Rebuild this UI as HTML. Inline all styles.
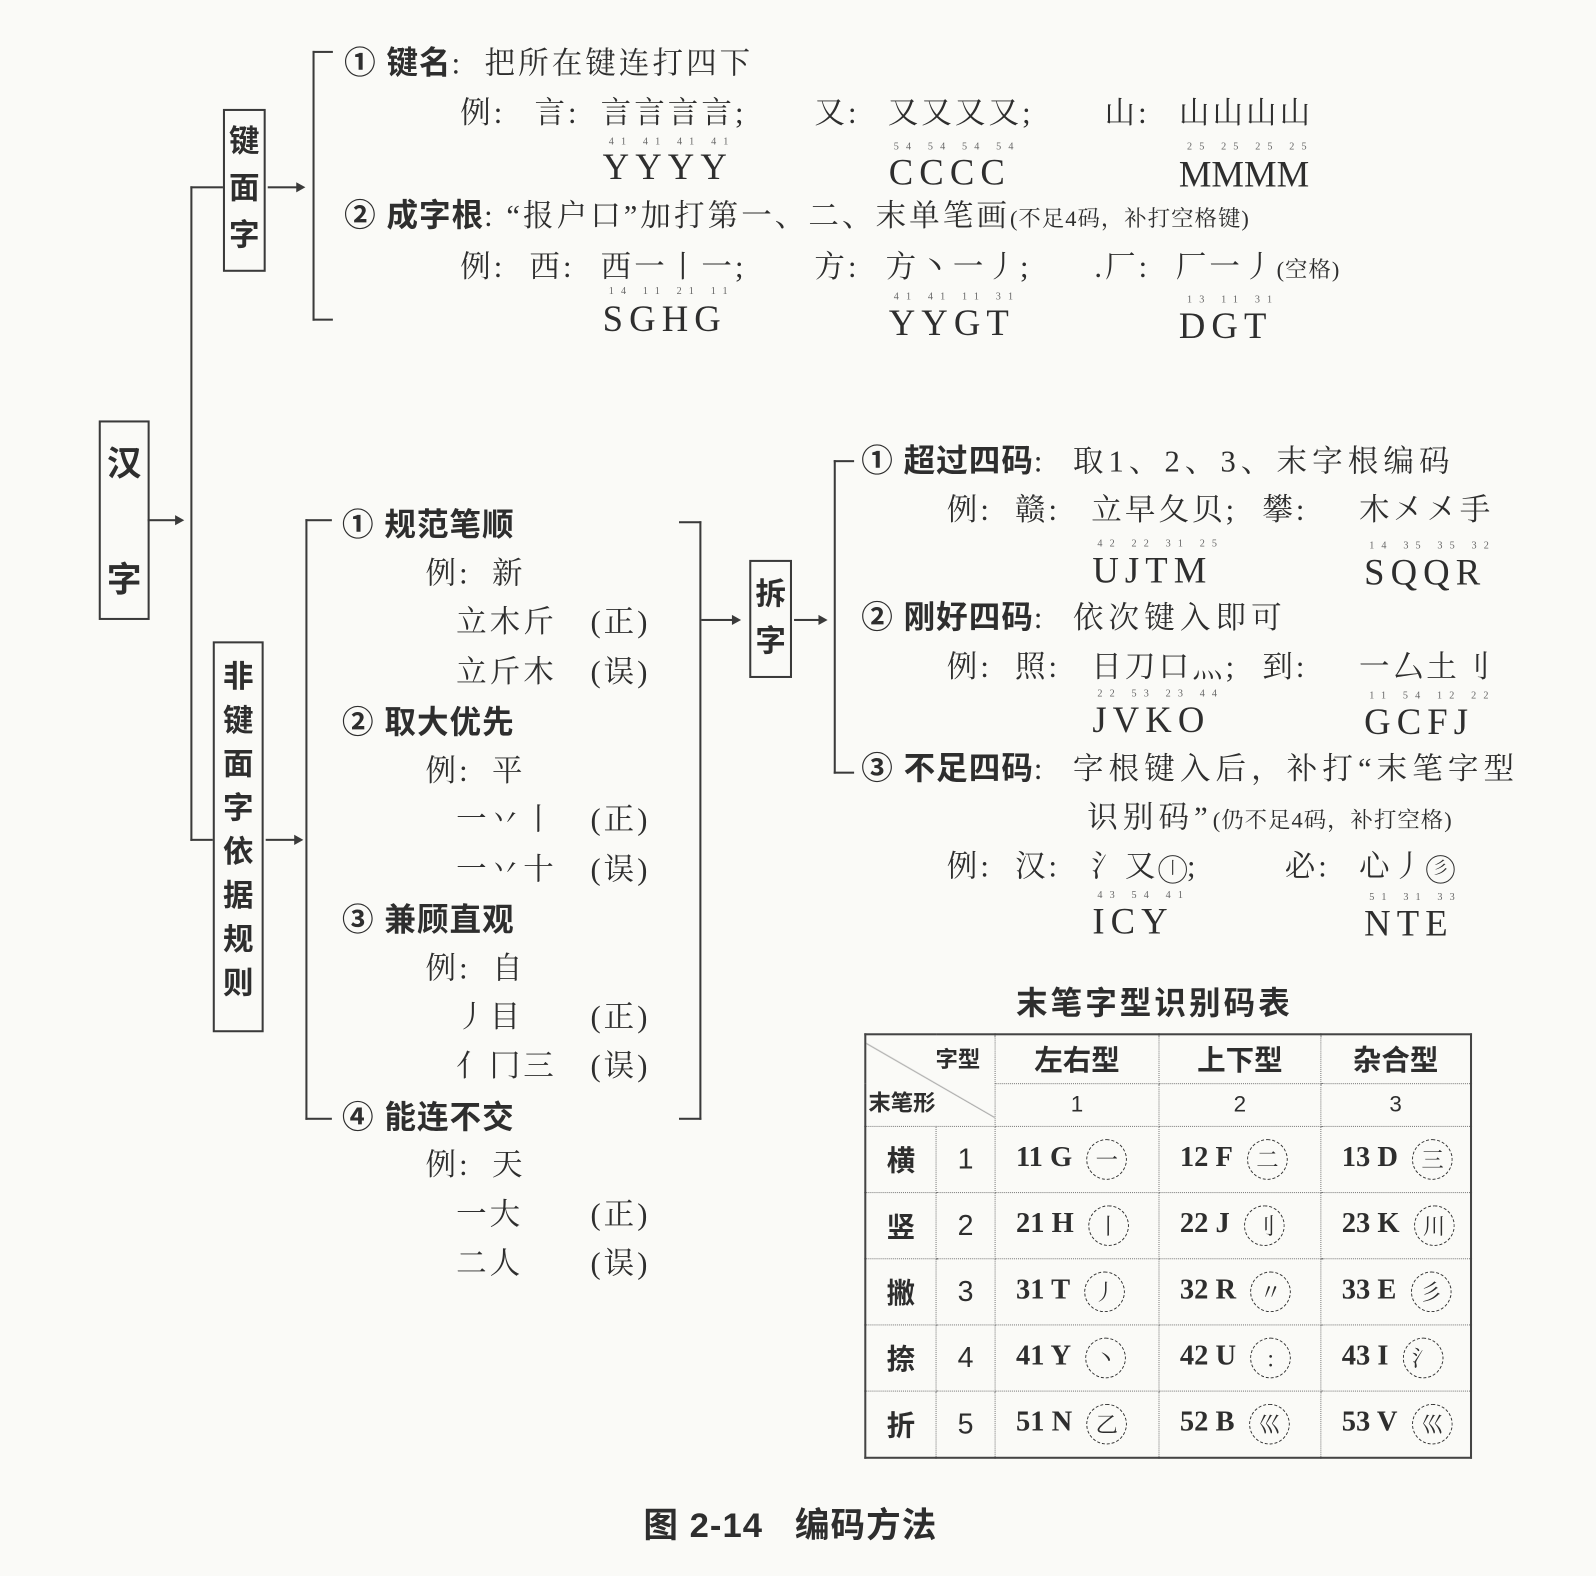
<!DOCTYPE html>
<html><head><meta charset="utf-8">
<style>
body{margin:0;background:#fafaf7;}
#w{width:1596px;height:1576px;overflow:hidden;background:#fafaf7;}
#c{position:relative;width:1568px;height:1548px;transform:scale(1.018);transform-origin:0 0;color:#2e2e2e;font-family:"Liberation Serif","Noto Serif CJK SC",serif;}
.t{position:absolute;white-space:nowrap;line-height:1;font-size:30px;letter-spacing:3px;}
.r{letter-spacing:5px;}
.b{font-family:"Liberation Sans","Noto Sans CJK SC",sans-serif;font-weight:bold;font-size:31px;letter-spacing:1px;}
.s{font-size:22px;letter-spacing:1px;}
.n{font-size:10px;color:#666;letter-spacing:7px;}
.L{font-size:36px;letter-spacing:6px;}
.h{position:absolute;background:#3a3a3a;height:2px;}
.v{position:absolute;background:#3a3a3a;width:2px;}
.box{position:absolute;border:2px solid #3a3a3a;font-family:"Liberation Sans","Noto Sans CJK SC",sans-serif;font-weight:bold;font-size:30px;text-align:center;line-height:44px;}
.ar{position:absolute;width:0;height:0;border-top:5px solid transparent;border-bottom:5px solid transparent;border-left:9px solid #3a3a3a;}
table{position:absolute;left:849px;top:1015px;width:597px;height:418px;border-collapse:collapse;border:2px solid #444;}
td{border:1px dotted #777;text-align:center;padding:0;font-size:28px;font-family:"Liberation Sans",sans-serif;}
td.k{font-family:"Liberation Sans","Noto Sans CJK SC",sans-serif;font-weight:bold;font-size:28px;}
td.c{font-family:"Liberation Serif",serif;font-weight:bold;font-size:28px;text-align:left;padding-left:20px;}
.ci{display:inline-block;width:38px;height:38px;border:1.5px dashed #333;border-radius:50%;font-size:22px;line-height:38px;text-align:center;margin-left:14px;vertical-align:middle;font-weight:normal;font-family:"Noto Serif CJK SC",serif;}
.cc{display:inline-block;width:26px;height:26px;border:1.5px solid #333;border-radius:50%;font-size:16px;line-height:26px;text-align:center;letter-spacing:0;vertical-align:middle;}
</style></head><body><div id="w"><div id="c">

<div class="box" style="left:97px;top:413px;width:46px;height:192px;font-size:34px;line-height:1;"><div style="margin-top:24px">汉</div><div style="margin-top:80px">字</div></div>
<div class="h" style="left:145px;top:510px;width:30px"></div><div class="ar" style="left:172px;top:506px"></div>
<div class="v" style="left:187px;top:183px;height:643px"></div>
<div class="h" style="left:187px;top:183px;width:32px"></div>
<div class="h" style="left:187px;top:824px;width:22px"></div>

<div class="box" style="left:219px;top:107px;width:42px;height:160px;line-height:46px;padding-top:8px;box-sizing:border-box">键<br>面<br>字</div>
<div class="h" style="left:263px;top:183px;width:30px"></div><div class="ar" style="left:291px;top:179px"></div>

<div class="v" style="left:307px;top:50px;height:265px"></div>
<div class="h" style="left:307px;top:50px;width:20px"></div>
<div class="h" style="left:307px;top:313px;width:20px"></div>

<div class="t" style="left:338px;top:46px"><span class="b">①&nbsp;键名</span>:&nbsp; 把所在键连打四下</div>
<div class="t" style="left:452px;top:97px">例:</div>
<div class="t" style="left:525px;top:97px">言:</div>
<div class="t" style="left:590px;top:97px">言言言言;</div>
<div class="t" style="left:800px;top:97px">又:</div>
<div class="t" style="left:872px;top:97px">又又又又;</div>
<div class="t" style="left:1085px;top:97px">山:</div>
<div class="t" style="left:1158px;top:97px">山山山山</div>
<div class="t n" style="left:598px;top:135px">41 41 41 41</div>
<div class="t n" style="left:878px;top:140px">54 54 54 54</div>
<div class="t n" style="left:1166px;top:140px">25 25 25 25</div>
<div class="t L" style="left:592px;top:146px">YYYY</div>
<div class="t L" style="left:873px;top:151px">CCCC</div>
<div class="t L" style="left:1158px;top:153px;letter-spacing:0">MMMM</div>

<div class="t" style="left:338px;top:196px"><span class="b">②&nbsp;成字根</span>: “报户口”加打第一、二、末单笔画<span class="s">(不足4码，补打空格键)</span></div>
<div class="t" style="left:452px;top:248px">例:</div>
<div class="t" style="left:520px;top:248px">西:</div>
<div class="t" style="left:590px;top:248px">西一丨一;</div>
<div class="t" style="left:800px;top:248px">方:</div>
<div class="t" style="left:870px;top:248px">方丶一丿;</div>
<div class="t" style="left:1075px;top:248px">.厂:</div>
<div class="t" style="left:1155px;top:248px">厂一丿<span class="s">(空格)</span></div>
<div class="t n" style="left:598px;top:282px">14 11 21 11</div>
<div class="t n" style="left:878px;top:287px">41 41 11 31</div>
<div class="t n" style="left:1166px;top:290px">13 11 31</div>
<div class="t L" style="left:592px;top:295px">SGHG</div>
<div class="t L" style="left:873px;top:299px">YYGT</div>
<div class="t L" style="left:1158px;top:302px">DGT</div>

<div class="box" style="left:209px;top:630px;width:50px;height:384px;line-height:43px;padding-top:12px;box-sizing:border-box">非<br>键<br>面<br>字<br>依<br>据<br>规<br>则</div>
<div class="h" style="left:261px;top:824px;width:30px"></div><div class="ar" style="left:289px;top:820px"></div>

<div class="v" style="left:300px;top:510px;height:590px"></div>
<div class="h" style="left:300px;top:510px;width:26px"></div>
<div class="h" style="left:300px;top:1098px;width:26px"></div>
<div class="v" style="left:687px;top:512px;height:588px"></div>
<div class="h" style="left:667px;top:512px;width:22px"></div>
<div class="h" style="left:667px;top:1098px;width:22px"></div>
<div class="h" style="left:689px;top:608px;width:32px"></div><div class="ar" style="left:719px;top:604px"></div>

<div class="t" style="left:336px;top:500px"><span class="b">①&nbsp;规范笔顺</span></div>
<div class="t" style="left:418px;top:549px">例:&nbsp; 新</div>
<div class="t" style="left:448px;top:597px">立木斤</div><div class="t" style="left:580px;top:597px">(正)</div>
<div class="t" style="left:448px;top:646px">立斤木</div><div class="t" style="left:580px;top:646px">(误)</div>
<div class="t" style="left:336px;top:694px"><span class="b">②&nbsp;取大优先</span></div>
<div class="t" style="left:418px;top:743px">例:&nbsp; 平</div>
<div class="t" style="left:448px;top:791px">一丷丨</div><div class="t" style="left:580px;top:791px">(正)</div>
<div class="t" style="left:448px;top:840px">一丷十</div><div class="t" style="left:580px;top:840px">(误)</div>
<div class="t" style="left:336px;top:888px"><span class="b">③&nbsp;兼顾直观</span></div>
<div class="t" style="left:418px;top:937px">例:&nbsp; 自</div>
<div class="t" style="left:448px;top:985px">丿目</div><div class="t" style="left:580px;top:985px">(正)</div>
<div class="t" style="left:448px;top:1033px">亻冂三</div><div class="t" style="left:580px;top:1033px">(误)</div>
<div class="t" style="left:336px;top:1082px"><span class="b">④&nbsp;能连不交</span></div>
<div class="t" style="left:418px;top:1130px">例:&nbsp; 天</div>
<div class="t" style="left:448px;top:1179px">一大</div><div class="t" style="left:580px;top:1179px">(正)</div>
<div class="t" style="left:448px;top:1227px">二人</div><div class="t" style="left:580px;top:1227px">(误)</div>

<div class="box" style="left:736px;top:550px;width:42px;height:116px;line-height:46px;padding-top:10px;box-sizing:border-box">拆<br>字</div>
<div class="h" style="left:780px;top:608px;width:26px"></div><div class="ar" style="left:804px;top:604px"></div>
<div class="v" style="left:819px;top:452px;height:308px"></div>
<div class="h" style="left:819px;top:452px;width:20px"></div>
<div class="h" style="left:819px;top:758px;width:20px"></div>

<div class="t r" style="left:846px;top:437px"><span class="b">①&nbsp;超过四码</span>:&nbsp; 取1、2、3、末字根编码</div>
<div class="t" style="left:930px;top:487px">例:</div>
<div class="t" style="left:997px;top:487px">赣:</div>
<div class="t" style="left:1072px;top:487px">立早夂贝;</div>
<div class="t" style="left:1240px;top:487px">攀:</div>
<div class="t" style="left:1335px;top:487px">木㐅㐅手</div>
<div class="t n" style="left:1078px;top:530px">42 22 31 25</div>
<div class="t n" style="left:1345px;top:532px">14 35 35 32</div>
<div class="t L" style="left:1073px;top:542px">UJTM</div>
<div class="t L" style="left:1340px;top:544px">SQQR</div>
<div class="t r" style="left:846px;top:591px"><span class="b">②&nbsp;刚好四码</span>:&nbsp; 依次键入即可</div>
<div class="t" style="left:930px;top:641px">例:</div>
<div class="t" style="left:997px;top:641px">照:</div>
<div class="t" style="left:1072px;top:641px">日刀口灬;</div>
<div class="t" style="left:1240px;top:641px">到:</div>
<div class="t" style="left:1335px;top:641px">一厶土刂</div>
<div class="t n" style="left:1078px;top:677px">22 53 23 44</div>
<div class="t n" style="left:1345px;top:679px">11 54 12 22</div>
<div class="t L" style="left:1073px;top:689px">JVKO</div>
<div class="t L" style="left:1340px;top:691px">GCFJ</div>
<div class="t r" style="left:846px;top:739px"><span class="b">③&nbsp;不足四码</span>:&nbsp; 字根键入后，补打“末笔字型</div>
<div class="t r" style="left:1068px;top:789px">识别码”<span class="s">(仍不足4码，补打空格)</span></div>
<div class="t" style="left:930px;top:837px">例:</div>
<div class="t" style="left:997px;top:837px">汉:</div>
<div class="t" style="left:1072px;top:837px">氵又<span class="cc">丨</span>;</div>
<div class="t" style="left:1262px;top:837px">必:</div>
<div class="t" style="left:1335px;top:837px">心丿<span class="cc">彡</span></div>
<div class="t n" style="left:1078px;top:875px">43 54 41</div>
<div class="t n" style="left:1345px;top:877px">51 31 33</div>
<div class="t L" style="left:1073px;top:887px">ICY</div>
<div class="t L" style="left:1340px;top:889px">NTE</div>

<div class="t b" style="left:998px;top:970px;letter-spacing:3px">末笔字型识别码表</div>
<table>
<tr style="height:48px"><td colspan="2" rowspan="2" style="position:relative;width:120px;font-family:'Liberation Sans','Noto Sans CJK SC',sans-serif;font-weight:bold;font-size:22px;background:linear-gradient(30deg,transparent 49.5%,#999 50%,transparent 50.8%)"><span style="position:absolute;right:14px;top:6px">字型</span><span style="position:absolute;left:2px;bottom:8px">末笔形</span></td><td class="k" style="width:160px">左右型</td><td class="k" style="width:158px">上下型</td><td class="k">杂合型</td></tr>
<tr style="height:42px"><td style="font-size:22px">1</td><td style="font-size:22px">2</td><td style="font-size:22px">3</td></tr>
<tr><td class="k" style="width:68px">横</td><td>1</td><td class="c">11 G<span class="ci">一</span></td><td class="c">12 F<span class="ci">二</span></td><td class="c">13 D<span class="ci">三</span></td></tr>
<tr><td class="k">竖</td><td>2</td><td class="c">21 H<span class="ci">丨</span></td><td class="c">22 J<span class="ci">刂</span></td><td class="c">23 K<span class="ci">川</span></td></tr>
<tr><td class="k">撇</td><td>3</td><td class="c">31 T<span class="ci">丿</span></td><td class="c">32 R<span class="ci">〃</span></td><td class="c">33 E<span class="ci">彡</span></td></tr>
<tr><td class="k">捺</td><td>4</td><td class="c">41 Y<span class="ci">丶</span></td><td class="c">42 U<span class="ci">:</span></td><td class="c">43 I<span class="ci">氵</span></td></tr>
<tr><td class="k">折</td><td>5</td><td class="c">51 N<span class="ci">乙</span></td><td class="c">52 B<span class="ci">巛</span></td><td class="c">53 V<span class="ci">巛</span></td></tr>
</table>

<div class="t b" style="left:632px;top:1482px;font-size:34px">图 2-14 &nbsp;&nbsp;编码方法</div>
</div></div></body></html>
